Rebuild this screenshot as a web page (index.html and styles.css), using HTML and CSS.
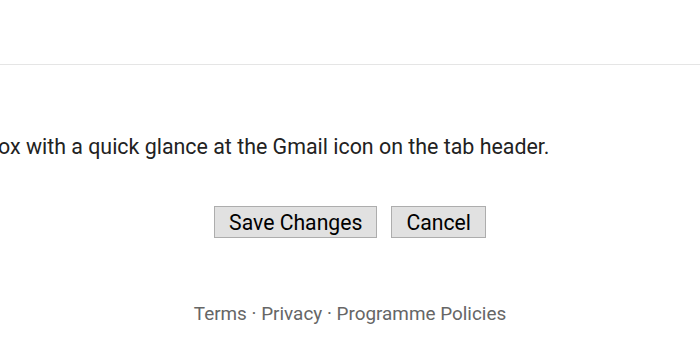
FILE: index.html
```html
<!DOCTYPE html>
<html lang="en">
<head>
  <meta charset="UTF-8" />
  <title>Settings</title>
  <link rel="stylesheet" href="styles.css">
</head>
<body>
  <div class="topbar"></div>

  <div class="settings">
    <p class="setting-desc">ox with a quick glance at the Gmail icon on the tab header.</p>
  </div>

  <div class="actions">
    <button class="btn">Save Changes</button>
    <button class="btn">Cancel</button>
  </div>

  <div class="footer">
    <a href="#">Terms</a> · <a href="#">Privacy</a> · <a href="#">Programme Policies</a>
  </div>
</body>
</html>
```

FILE: styles.css
```css
body {
  margin: 0;
  padding: 0;
  height: 360px;
  background: #fff;
  font-family: Roboto, 'Noto Sans', sans-serif;
  color: #222;
  overflow: hidden;
}

.topbar {
  height: 64px;
  border-bottom: 1px solid #e5e5e5;
}

.settings {
  padding-top: 70px;
}

.setting-desc {
  margin: 0 0 0 -2px;
  font-size: 21.4px;
  line-height: 24px;
  white-space: nowrap;
  color: #222;
}

.actions {
  display: flex;
  justify-content: center;
  gap: 14px;
  margin-top: 47px;
}

.btn {
  font-family: Roboto, sans-serif;
  font-size: 21.2px;
  color: #000;
  background: #e1e1e1;
  border: 1px solid #adadad;
  border-radius: 0;
  height: 32px;
  padding: 0 14px;
}

.footer {
  text-align: center;
  margin-top: 65px;
  font-size: 18.9px;
  line-height: 22px;
  color: #666;
}

.footer a {
  color: #666;
  text-decoration: none;
}
```
